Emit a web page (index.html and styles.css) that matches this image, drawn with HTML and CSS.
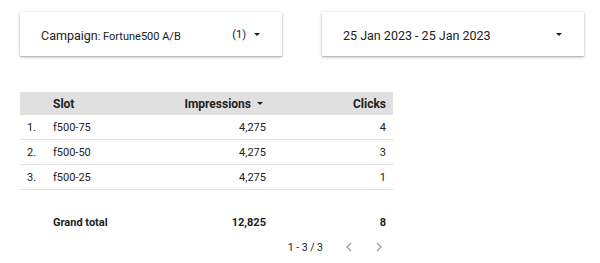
FILE: index.html
```html
<!DOCTYPE html>
<html>
<head>
<meta charset="utf-8">
<link rel="stylesheet" href="styles.css">
</head>
<body>
<div class="controls">
  <div class="card">
    <div class="label"><span class="key">Campaign</span><span class="val">: Fortune500 A/B</span></div>
    <div class="right"><span class="count">(1)</span><span class="caret"></span></div>
  </div>
  <div class="card">
    <div class="label"><span class="key">25 Jan 2023 - 25 Jan 2023</span></div>
    <div class="right"><span class="caret"></span></div>
  </div>
</div>
<div class="table">
  <div class="row head">
    <div class="c num"></div>
    <div class="c slot">Slot</div>
    <div class="c imp">Impressions<span class="sort"></span></div>
    <div class="c clk">Clicks</div>
  </div>
  <div class="row">
    <div class="c num">1.</div>
    <div class="c slot">f500-75</div>
    <div class="c imp">4,275</div>
    <div class="c clk">4</div>
  </div>
  <div class="row">
    <div class="c num">2.</div>
    <div class="c slot">f500-50</div>
    <div class="c imp">4,275</div>
    <div class="c clk">3</div>
  </div>
  <div class="row">
    <div class="c num">3.</div>
    <div class="c slot">f500-25</div>
    <div class="c imp">4,275</div>
    <div class="c clk">1</div>
  </div>
  <div class="row total">
    <div class="c num"></div>
    <div class="c slot">Grand total</div>
    <div class="c imp">12,825</div>
    <div class="c clk">8</div>
  </div>
  <div class="pager">
    <span class="range">1 - 3 / 3</span>
    <svg class="chev" width="12" height="12" viewBox="0 0 12 12"><path d="M8 2 L4 6 L8 10" fill="none" stroke="#9e9e9e" stroke-width="1.4"/></svg>
    <svg class="chev" width="12" height="12" viewBox="0 0 12 12"><path d="M4 2 L8 6 L4 10" fill="none" stroke="#9e9e9e" stroke-width="1.4"/></svg>
  </div>
</div>
</body>
</html>
```

FILE: styles.css
```css
* { box-sizing: border-box; }
html, body { margin: 0; padding: 0; background: #fff; }
body {
  font-family: Roboto, "Liberation Sans", sans-serif;
  color: #212121;
  width: 600px;
  height: 263px;
  overflow: hidden;
}
.controls {
  display: flex;
  gap: 40px;
  padding: 12px 0 0 20px;
}
.card {
  width: 262px;
  height: 44px;
  background: #fff;
  box-shadow: 0 1px 3px rgba(0,0,0,0.28), 0 1px 1px rgba(0,0,0,0.12);
  display: flex;
  align-items: center;
  justify-content: space-between;
  padding: 0 22px 0 21px;
}
.key { font-size: 12.5px; }
.val { font-size: 11px; }
.right { display: flex; align-items: center; gap: 8px; font-size: 11px; }
.caret {
  width: 0; height: 0;
  border-left: 3.5px solid transparent;
  border-right: 3.5px solid transparent;
  border-top: 3.5px solid #212121;
}
.table {
  margin: 36px 0 0 20px;
  width: 373px;
}
.row {
  display: grid;
  grid-template-columns: 33px 1fr 100px 127px;
  height: 25px;
  align-items: center;
  font-size: 11px;
  border-bottom: 1px solid #e0e0e0;
}
.row.head {
  height: 23px;
  background: #e0e0e0;
  font-weight: 700;
  font-size: 12px;
  border-bottom: none;
}
.c.num { padding-left: 7px; }
.c.imp { text-align: right; }
.c.clk { text-align: right; padding-right: 7px; }
.head .imp { padding-right: 3px; display: flex; justify-content: flex-end; align-items: center; }
.sort {
  display: inline-block;
  margin-left: 6px;
  width: 0; height: 0;
  border-left: 3px solid transparent;
  border-right: 3px solid transparent;
  border-top: 3px solid #212121;
}
.row.total {
  margin-top: 20px;
  border-bottom: none;
  font-weight: 700;
}
.pager {
  display: flex;
  justify-content: flex-end;
  align-items: center;
  height: 24px;
  font-size: 10.5px;
  padding-right: 8px;
  gap: 18px;
}
.range { margin-right: 2px; }
```
